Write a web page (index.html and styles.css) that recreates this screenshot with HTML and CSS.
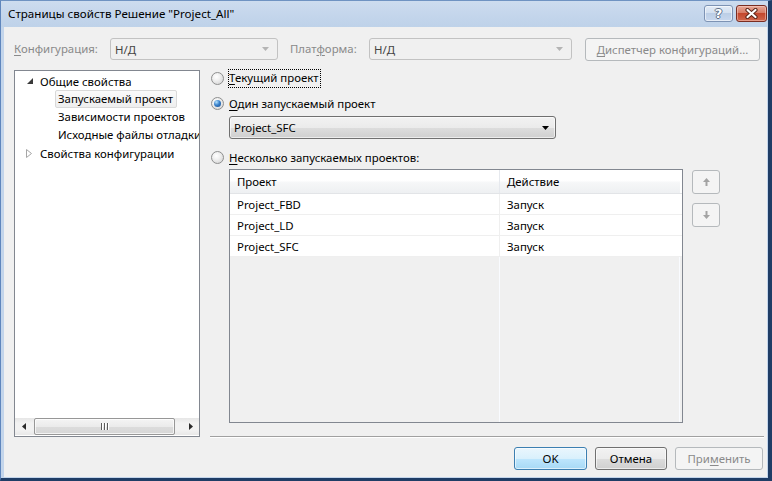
FILE: index.html
```html
<!DOCTYPE html>
<html lang="ru">
<head>
<meta charset="utf-8">
<title>Страницы свойств</title>
<link rel="stylesheet" href="styles.css">
</head>
<body>
<div class="window">
  <div class="titlebar">
    <span class="title">Страницы свойств Решение "Project_All"</span>
    <div class="caption">
      <div class="cap-btn help"><span class="qmark">?</span></div>
      <div class="cap-btn close">
        <svg width="15" height="11" viewBox="0 0 15 11"><path d="M3.5 2 L11.5 9 M11.5 2 L3.5 9" stroke="#5a2418" stroke-width="4.2" stroke-linecap="round"/><path d="M3.5 2 L11.5 9 M11.5 2 L3.5 9" stroke="#ffffff" stroke-width="2.2" stroke-linecap="round"/></svg>
      </div>
    </div>
  </div>
  <div class="client">
    <div class="toolbar">
      <span class="lbl lbl-conf dis"><u>К</u>онфигурация:</span>
      <div class="combo dis combo-conf"><span class="combo-text">Н/Д</span><svg class="dd" width="7" height="4" viewBox="0 0 7 4"><polygon points="0,0 7,0 3.5,4" fill="#b4b4b4"/></svg></div>
      <span class="lbl lbl-plat dis">Плат<u>ф</u>орма:</span>
      <div class="combo dis combo-plat"><span class="combo-text">Н/Д</span><svg class="dd" width="7" height="4" viewBox="0 0 7 4"><polygon points="0,0 7,0 3.5,4" fill="#b4b4b4"/></svg></div>
      <div class="btn btn-dis btn-mgr"><u>Д</u>испетчер конфигураций...</div>
    </div>
    <div class="main">
      <div class="tree">
        <div class="tree-items">
          <div class="ti l0"><svg class="tri" width="6" height="6" viewBox="0 0 6 6"><polygon points="6,0 6,6 0,6" fill="#3a3a3a"/></svg><span>Общие свойства</span></div>
          <div class="ti l1"><span class="node sel">Запускаемый проект</span></div>
          <div class="ti l1"><span class="node">Зависимости проектов</span></div>
          <div class="ti l1"><span class="node">Исходные файлы отладки</span></div>
          <div class="ti l0"><svg class="tri tri-c" width="6" height="9" viewBox="0 0 6 9"><polygon points="0.5,0.5 5.5,4.5 0.5,8.5" fill="none" stroke="#a6a6a6"/></svg><span>Свойства конфигурации</span></div>
        </div>
        <div class="hscroll">
          <div class="sb-arrow"><svg width="4" height="7" viewBox="0 0 4 7"><polygon points="4,0 4,7 0,3.5" fill="#2a2a2a"/></svg></div>
          <div class="sb-thumb"><span class="grip"></span><span class="grip"></span><span class="grip"></span></div>
          <div class="sb-fill"></div>
          <div class="sb-arrow"><svg width="4" height="7" viewBox="0 0 4 7"><polygon points="0,0 4,3.5 0,7" fill="#2a2a2a"/></svg></div>
        </div>
      </div>
      <div class="panel">
        <div class="options">
          <div class="opt opt1"><span class="radio"></span><span class="focus"><u>Т</u>екущий проект</span></div>
          <div class="opt opt2"><span class="radio on"></span><span class="opt-text"><u>О</u>дин запускаемый проект</span></div>
          <div class="combo combo-proj"><span class="combo-text">Project_SFC</span><svg class="dd" width="7" height="4" viewBox="0 0 7 4"><polygon points="0,0 7,0 3.5,4" fill="#000"/></svg></div>
          <div class="opt opt3"><span class="radio"></span><span class="opt-text"><u>Н</u>есколько запускаемых проектов:</span></div>
          <div class="grid-row">
            <div class="table">
              <div class="thead">
                <div class="c1">Проект</div>
                <div class="c2">Действие</div>
                <div class="c3"></div>
              </div>
              <div class="tr"><div class="c1">Project_FBD</div><div class="c2">Запуск</div></div>
              <div class="tr"><div class="c1">Project_LD</div><div class="c2">Запуск</div></div>
              <div class="tr"><div class="c1">Project_SFC</div><div class="c2">Запуск</div></div>
              <div class="tfill"><div class="c1"></div><div class="c2"></div></div>
            </div>
            <div class="moves">
              <div class="btn btn-dis move"><svg width="7" height="8" viewBox="0 0 7 8"><polygon points="3.5,0 7,4 4.5,4 4.5,8 2.5,8 2.5,4 0,4" fill="#a3a3a3"/></svg></div>
              <div class="btn btn-dis move"><svg width="7" height="8" viewBox="0 0 7 8"><polygon points="3.5,8 7,4 4.5,4 4.5,0 2.5,0 2.5,4 0,4" fill="#a3a3a3"/></svg></div>
            </div>
          </div>
        </div>
        <div class="sep"></div>
      </div>
    </div>
    <div class="footer">
      <div class="btn btn-default btn-ok">OK</div>
      <div class="btn btn-cancel">Отмена</div>
      <div class="btn btn-dis btn-apply">При<u>м</u>енить</div>
    </div>
  </div>
</div>
</body>
</html>
```

FILE: styles.css
```css
* { box-sizing: border-box; }
html, body { margin: 0; padding: 0; }
body {
  width: 772px;
  height: 481px;
  overflow: hidden;
  font-family: "Noto Sans", "Open Sans", sans-serif;
  font-size: 11.4px;
  color: #000;
  background: #1e3b63;
}
u { text-decoration: underline; text-underline-offset: 2px; }

.window {
  width: 772px;
  height: 481px;
  display: flex;
  flex-direction: column;
  border-top: 1px solid #6f93c2;
  border-left: 1px solid #5f86bd;
  border-right: 4px solid #1f3d66;
  border-bottom: 3px solid #1f3d66;
  background: #c3d5eb;
}

/* title bar */
.titlebar {
  height: 26px;
  display: flex;
  align-items: flex-start;
  padding: 0 1px 0 7px;
  background: linear-gradient(#cddcef 0%, #c3d5eb 60%, #bed2e9 100%);
}
.title {
  line-height: 26px;
  font-size: 11.6px;
  color: #000;
  white-space: nowrap;
}
.caption {
  margin-left: auto;
  margin-top: 4px;
  display: flex;
  gap: 3px;
}
.cap-btn {
  height: 17px;
  border-radius: 3px;
  display: flex;
  align-items: center;
  justify-content: center;
}
.help {
  width: 29px;
  border: 1px solid #7d93b4;
  background: linear-gradient(#e2ebf6 0%, #d3e0f0 45%, #bccee6 50%, #c8d8ee 100%);
  box-shadow: inset 0 0 0 1px rgba(255,255,255,0.55);
}
.qmark {
  font-family: "DejaVu Sans", sans-serif;
  font-weight: bold;
  font-size: 13px;
  line-height: 13px;
  color: #fff;
  text-shadow: -1px 0 #5d6f88, 1px 0 #5d6f88, 0 -1px #5d6f88, 0 1px #5d6f88;
}
.close {
  width: 31px;
  border: 1px solid #7a2d22;
  background: linear-gradient(#e7a898 0%, #d77c66 45%, #c4472d 50%, #d0674d 100%);
  box-shadow: inset 0 0 0 1px rgba(255,220,210,0.45);
}

/* client */
.client {
  margin: 0 1px 1px 3px;
  height: 450px;
  background: #f0f0f0;
  display: flex;
  flex-direction: column;
}
.toolbar {
  height: 43px;
  padding: 11px 0 0 10px;
  display: flex;
  align-items: flex-start;
}
.lbl {
  height: 22px;
  line-height: 21px;
  white-space: nowrap;
}
.dis { color: #8a8a8a; }
.lbl-conf { width: 96px; }
.lbl-plat { width: 79px; margin-left: 12px; }

.combo {
  height: 22px;
  border-radius: 3px;
  display: flex;
  align-items: center;
  padding: 0 8px 0 4px;
}
.combo-text { flex: 1; white-space: nowrap; }
.combo.dis {
  border: 1px solid #c2c2c2;
  background: #f0f0f0;
}
.combo.dis .combo-text { color: #444; }
.combo-conf { width: 168px; }
.combo-plat { width: 203px; }

.btn {
  height: 23px;
  border-radius: 3px;
  display: flex;
  align-items: center;
  justify-content: center;
  white-space: nowrap;
}
.btn-dis {
  border: 1px solid #b5b9bc;
  background: #f4f4f4;
  color: #8a8a8a;
}
.btn-mgr { width: 175px; margin-left: 13px; }

/* main */
.main {
  height: 368px;
  padding-left: 10px;
  display: flex;
  align-items: flex-start;
}
.tree {
  width: 186px;
  height: 367px;
  border: 1px solid #828790;
  background: #fff;
  display: flex;
  flex-direction: column;
  overflow: hidden;
}
.tree-items {
  flex: 1;
  padding-top: 1px;
}
.ti {
  height: 18px;
  display: flex;
  align-items: center;
  white-space: nowrap;
}
.l0 { padding-left: 12px; }
.tri { margin-right: 7px; flex: none; }
.tri-c { margin-left: -1px; margin-right: 8px; }
.l1 { padding-left: 40px; }
.node {
  height: 18px;
  line-height: 16px;
  padding: 0 3px 0 2px;
  border: 1px solid transparent;
  border-radius: 2px;
}
.node.sel {
  border-color: #d9d9d9;
  background: linear-gradient(#fafafa, #eeeeee);
}

.hscroll {
  height: 17px;
  margin-bottom: 1px;
  display: flex;
  align-items: stretch;
  background: linear-gradient(#e6e6e6, #f2f2f2 30%, #f2f2f2 70%, #e8e8e8);
}
.sb-arrow {
  width: 17px;
  display: flex;
  align-items: center;
  justify-content: center;
}
.sb-thumb {
  width: 141px;
  margin-left: 2px;
  border: 1px solid #979797;
  border-radius: 2px;
  background: linear-gradient(#f4f4f4 0%, #ebebeb 50%, #dcdcdc 51%, #d6d6d6 100%);
  box-shadow: inset 0 0 0 1px rgba(255,255,255,0.7);
  display: flex;
  align-items: center;
  justify-content: center;
  gap: 2px;
}
.grip {
  width: 1px;
  height: 7px;
  background: #5b5b5b;
  box-shadow: 1px 0 #fff;
}
.sb-fill { flex: 1; }

/* right panel */
.panel {
  width: 554px;
  height: 368px;
  margin-left: 10px;
  display: flex;
  flex-direction: column;
}
.options {
  flex: 1;
  display: flex;
  flex-direction: column;
  align-items: flex-start;
}
.opt {
  height: 17px;
  display: flex;
  align-items: center;
  white-space: nowrap;
}
.opt1 { margin-top: 0; }
.opt2 { margin-top: 8px; }
.opt3 { margin-top: 10px; }
.radio {
  width: 13px;
  height: 13px;
  margin-left: 1px;
  margin-right: 5px;
  border-radius: 50%;
  border: 1px solid #8e8f8f;
  background: radial-gradient(circle at 40% 35%, #ffffff 0%, #f1f1f1 35%, #cfcfcf 100%);
  display: flex;
  align-items: center;
  justify-content: center;
}
.radio.on::after {
  content: "";
  width: 7px;
  height: 7px;
  border-radius: 50%;
  background: radial-gradient(circle at 35% 30%, #b5e3ff 0%, #3a82cc 45%, #144a8c 100%);
}
.focus {
  outline: 1px dotted #000;
  padding: 0 1px 1px 0;
  line-height: 16px;
}
.combo-proj {
  margin-top: 4px;
  margin-left: 19px;
  width: 327px;
  height: 23px;
  border: 1px solid #707070;
  background: linear-gradient(#f2f2f2 0%, #ebebeb 50%, #dddddd 51%, #cfcfcf 100%);
  box-shadow: inset 0 0 0 1px rgba(255,255,255,0.6);
  padding-right: 6px;
}

.grid-row {
  margin-top: 3px;
  margin-left: 19px;
  display: flex;
  align-items: flex-start;
}
.table {
  width: 454px;
  height: 254px;
  border: 1px solid #828790;
  background: #f0f0f0;
  display: flex;
  flex-direction: column;
}
.thead {
  height: 24px;
  display: flex;
  background: linear-gradient(#ffffff 0%, #ffffff 45%, #f6f7f8 55%, #eef0f2 100%);
  border-bottom: 1px solid #e2e4e7;
}
.thead > div, .tr > div {
  padding-left: 7px;
  display: flex;
  align-items: center;
  white-space: nowrap;
}
.c1 { width: 270px; border-right: 1px solid #e6e9ee; }
.c2 { width: 180px; }
.thead .c3 { flex: 1; background: #fff; padding: 0; }
.tr {
  height: 21px;
  display: flex;
  background: #fff;
  border-bottom: 1px solid #efefef;
}
.tr .c1 { border-right-color: #efefef; }
.tfill {
  flex: 1;
  display: flex;
}
.tfill .c1 { border-right: 1px solid #f9fbff; }
.tfill .c2 { border-right: 1px solid #f9fbff; }

.moves {
  margin-left: 9px;
  margin-top: 1px;
  display: flex;
  flex-direction: column;
  gap: 9px;
}
.move {
  width: 28px;
  height: 24px;
}

.sep {
  height: 2px;
  border-top: 1px solid #a0a0a0;
  border-bottom: 1px solid #ffffff;
}

/* footer */
.footer {
  flex: 1;
  display: flex;
  justify-content: flex-end;
  align-items: flex-start;
  padding: 9px 4px 0 0;
  gap: 8px;
}
.btn-default {
  width: 73px;
  border: 1px solid #3c7fb1;
  background: linear-gradient(#eaf6fd 0%, #d9f0fc 50%, #bee6fd 51%, #a7d9f5 100%);
  box-shadow: inset 0 0 0 1px rgba(255,255,255,0.6);
}
.btn-cancel {
  width: 72px;
  border: 1px solid #707070;
  background: linear-gradient(#f2f2f2 0%, #ebebeb 50%, #dddddd 51%, #cfcfcf 100%);
  box-shadow: inset 0 0 0 1px rgba(255,255,255,0.6);
}
.btn-apply { width: 88px; }
```
